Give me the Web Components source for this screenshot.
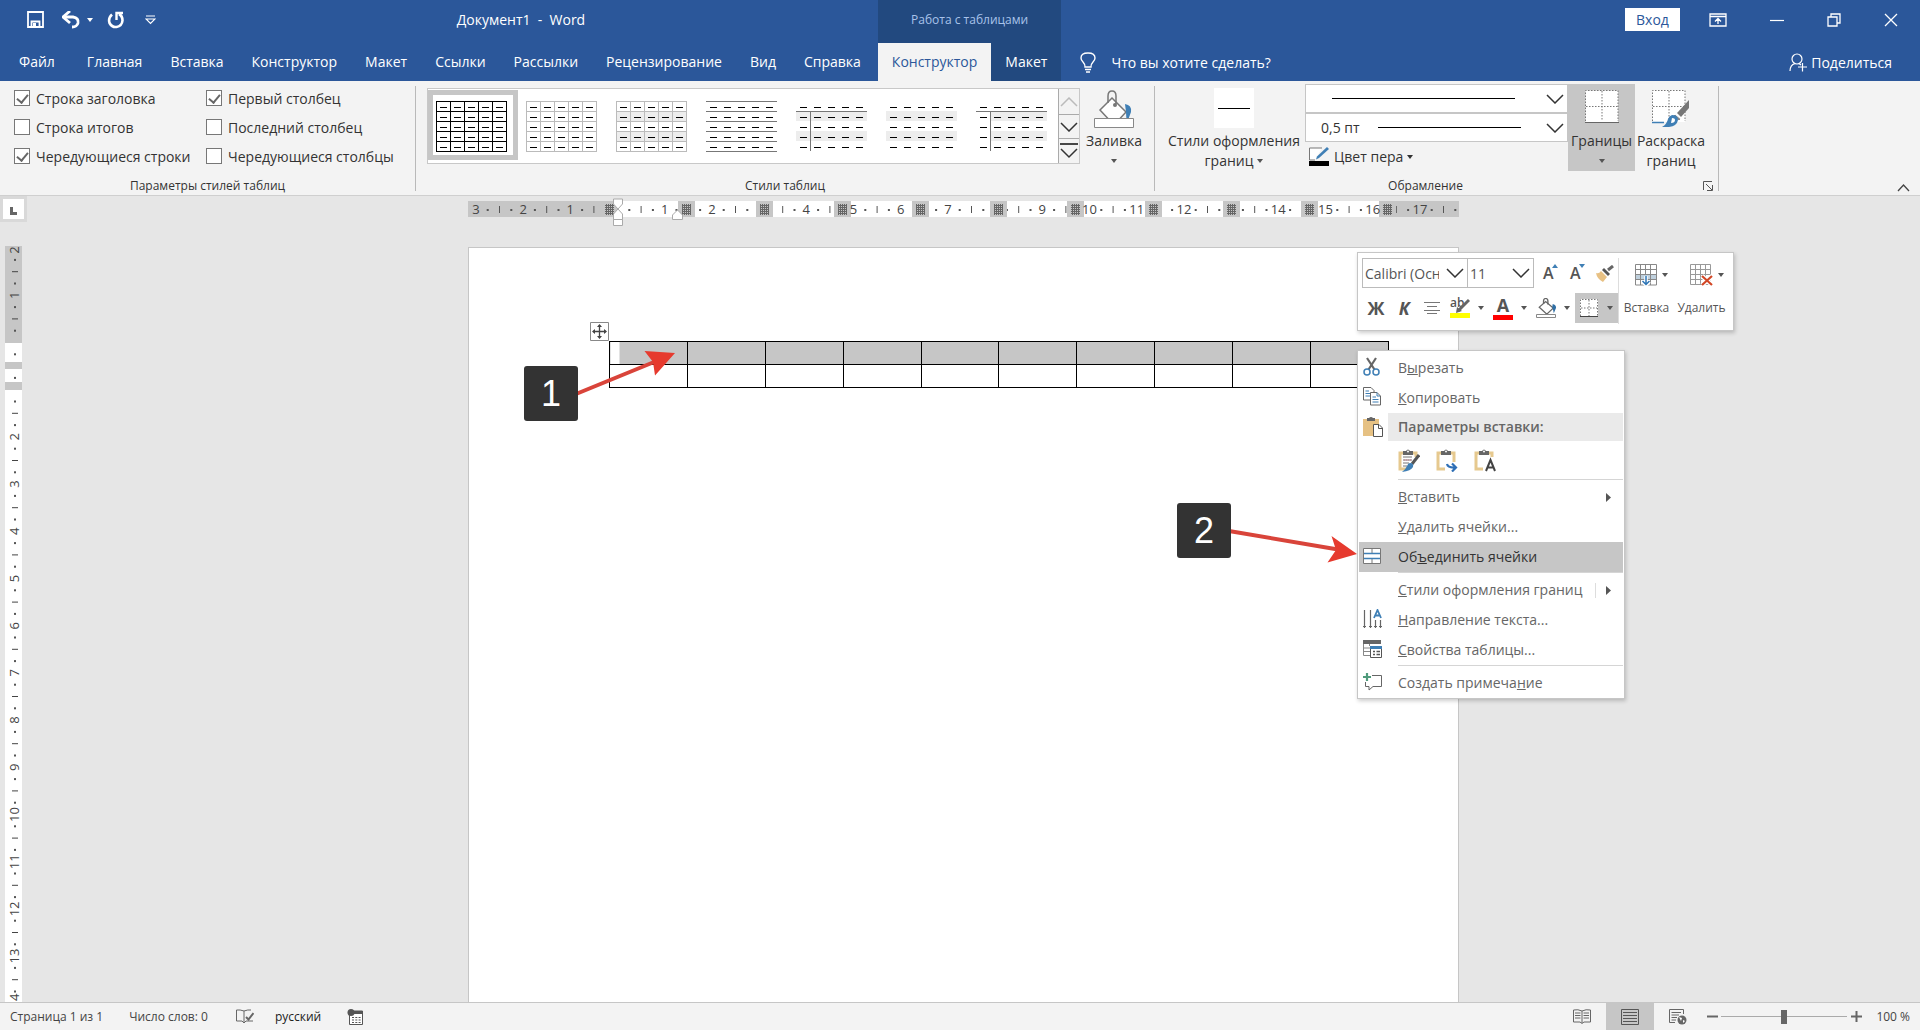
<!DOCTYPE html>
<html lang="ru">
<head>
<meta charset="utf-8">
<title>Документ1 - Word</title>
<style>
html,body{margin:0;height:100%}
body{font-family:"Open Sans","Noto Sans",sans-serif;font-size:14px;color:#333;overflow:hidden;
--blue:#2b579a;--dark:#22497f;--bar:#f3f3f3;--sel:#c6c6c6}
</style>
</head>
<body>
<word-app></word-app>
<script>
const reset=`<style>
*{box-sizing:border-box}
button,select,input{font:inherit;color:inherit;margin:0}
button{background:none;border:0;padding:0}
select{appearance:none;border:0;background:transparent;outline:0;border-radius:0}
svg{display:block}
</style>`;
function define(name,html,setup){
  const t=document.createElement('template');
  t.innerHTML=reset+html;
  customElements.define(name,class extends HTMLElement{
    constructor(){super();this.attachShadow({mode:'open'}).append(t.content.cloneNode(true));}
    connectedCallback(){if(setup&&!this.ready){this.ready=true;setup(this,this.shadowRoot);}}
  });
}

const clip=`<path d="M5 4H2V20H9M15 4H18V8" fill="none" stroke="#e6c98f" stroke-width="3"/><path d="M5 2H8Q10 -1 12 2H15V6H5Z" fill="#666"/><circle cx="10" cy="2.500" r="1" fill="#fff"/>`;
const bucket=`<path d="M18 8L32 22L20 35L6 20Z" fill="#fff" stroke="#777" stroke-width="1.500"/><path d="M14 13V6Q14 1 18 1Q22 1 22 6V14" fill="none" stroke="#777" stroke-width="1.500"/><circle cx="21" cy="15" r="2" fill="#777"/><path d="M31 14Q38 15 37 22L33 33Q32 26 32 22Z" fill="#3f7fb5"/>`;
const icons={
save:[17,17,'<path d="M1 1H16V16H1Z" fill="none" stroke="#fff" stroke-width="1.800"/><path d="M4.500 16V10.500H12.500V16" fill="none" stroke="#fff" stroke-width="1.800"/><path d="M6 12H9V16H6Z" fill="#fff"/>'],
undo:[19,18,'<path d="M3 6H11Q17 7 16 12Q15 16 10 16" fill="none" stroke="#fff" stroke-width="2.800"/><path d="M8 0L1 6L8 12" fill="none" stroke="#fff" stroke-width="2.800"/>'],
redo:[18,18,'<path d="M5 3.500Q1 7 2.500 12Q5 16.500 9.500 16Q15 15 15.500 9.500Q15.500 5 12 3" fill="none" stroke="#fff" stroke-width="2.600"/><path d="M9.500 9V2H16" fill="none" stroke="#fff" stroke-width="2.400"/>'],
qat:[11,10,'<path d="M1 1H10M1 4H10L5.500 8.500Z" fill="none" stroke="#fff" stroke-width="1.200"/>'],
down:[6,4,'<path d="M0 0H6L3 4Z" fill="currentColor"/>'],
right:[5,9,'<path d="M0 0L5 4.500L0 9Z" fill="#555"/>'],
chev:[18,10,'<path d="M1 1L9 9L17 1" fill="none" stroke="#333" stroke-width="1.500"/>'],
chevup:[18,10,'<path d="M1 9L9 1L17 9" fill="none" stroke="#bbb" stroke-width="1.500"/>'],
more:[18,16,'<path d="M0 1H18" stroke="#333" stroke-width="1.800"/><path d="M1 6L9 14L17 6" fill="none" stroke="#333" stroke-width="1.500"/>'],
collapse:[13,8,'<path d="M1 7L6.500 1L12 7" fill="none" stroke="#444" stroke-width="1.300"/>'],
bulb:[16,21,'<path d="M5 15Q5 12 3 10Q1 8 1 6Q1 1 8 1Q15 1 15 6Q15 8 13 10Q11 12 11 15Z" fill="none" stroke="#fff" stroke-width="1.400"/><path d="M5 17.500H11M6 20H10" stroke="#fff" stroke-width="1.500"/>'],
ribbon:[18,14,'<path d="M1 1H17V13H1ZM1 3.500H17M9 11V6M6 8.500L9 5.500L12 8.500" fill="none" stroke="#fff" stroke-width="1.300"/>'],
min:[14,14,'<path d="M0 7.500H14" stroke="#fff" stroke-width="1.200"/>'],
restore:[14,14,'<path d="M1 4H10V13H1ZM4 4V1H13V10H10" fill="none" stroke="#fff" stroke-width="1.300"/>'],
close:[14,14,'<path d="M1 1L13 13M13 1L1 13" stroke="#fff" stroke-width="1.300"/>'],
share:[19,19,'<circle cx="8" cy="6" r="5" fill="none" stroke="#fff" stroke-width="1.200"/><path d="M1 18Q1 12 6 10.500M10 10.500L12 12M9 14H18M13.500 10V18.500" fill="none" stroke="#fff" stroke-width="1.200"/>'],
bucket:[40,38,bucket+'<path d="M.5 28.500H39.500V37.500H.5Z" fill="#fff" stroke="#888"/>'],
bucketsm:[20,20,'<g transform="translate(0 0) scale(.54 .46)" stroke-width="2.500"><path d="M18 8L32 22L20 35L6 20Z" fill="#fff" stroke="#666"/><path d="M14 13V6Q14 1 18 1Q22 1 22 6V14" fill="none" stroke="#666"/><path d="M31 13Q38 15 37 22L33 33Q32 26 30 20Z" fill="#2f6fa5"/></g><path d="M.5 16.500H19.500V19.500H.5Z" fill="#fff" stroke="#888"/>'],
border:[34,33,'<path d="M.5 .5H33V32H.5Z" fill="#fff"/><path d="M.5 31V.5H33V31M17 1V31M1 16.500H33" fill="none" stroke="#777" stroke-dasharray="1.500 1.500"/><path d="M0 32.500H34" stroke="#666"/>'],
bordersm:[18,18,'<path d="M0 0H18V18H0Z" fill="#fff"/><path d="M.5 17V.5H17.500V17M9 1V17M1 9H17" fill="none" stroke="#777" stroke-dasharray="1.500 1.500"/><path d="M0 17.500H18" stroke="#444"/>'],
paint:[38,38,'<path d="M.5 .5H33V32H.5Z" fill="#fff"/><path d="M.5 31V.5H33V31M17 1V31M1 16.500H33" fill="none" stroke="#777" stroke-dasharray="1.500 1.500"/><path d="M0 32.500H12" stroke="#3f7fb5" stroke-width="1.500"/><path d="M37 10V18L29 27L25 23Z" fill="#777"/><path d="M23 24L29 29L27 31L21 26Z" fill="#888" stroke="#fff"/><path d="M20 25Q26 25 26 30Q25 36 17 37H10Q15 34 16 29Q17 26 20 25Z" fill="#3f7fb5"/><path d="M20 28Q23 28 23 30Q23 33 19 33" fill="#fff"/>'],
pen:[21,20,'<path d="M13 1H.5V13H6" fill="#fff" stroke="#777"/><path d="M18 0L20 2L10 11L7 12.500L8 9.500Z" fill="#3f7fb5"/><path d="M0 14H20V19H0Z" fill="#000"/>'],
launch:[10,10,'<path d="M.5 9V.5H9M3 3L9 9M9.500 4V9.500H4" fill="none" stroke="#555"/>'],
move:[19,19,'<path d="M.5 .5H18.500V18.500H.5Z" fill="#fff" stroke="#888"/><path d="M9.500 3V16M3 9.500H16" stroke="#444" stroke-width="1.300"/><path d="M9.500 2L7 5H12ZM9.500 17L7 14H12ZM2 9.500L5 7V12ZM17 9.500L14 7V12Z" fill="#444"/>'],
brush:[18,17,'<path d="M17 1L12 5" stroke="#666" stroke-width="3"/><path d="M8 3L14 9L12 11L6 5Z" fill="#555"/><path d="M5 6L11 12L7 17Q1 14 0 8Q3 9 5 6Z" fill="#e8c184"/>'],
ins:[22,22,'<path d="M1 1H21V21H1Z" fill="#fff"/><path d="M1 10H21V15H1Z" fill="#bfd0dd"/><path d="M.5 .5H21.500V21H.5ZM.5 5.500H21M.5 10.500H21M.5 15.500H21M5.500 1V21M10.500 1V10M15.500 1V21" fill="none" stroke="#888"/><path d="M11 12V21M7.500 17.500L11 21L14.500 17.500" fill="none" stroke="#fff" stroke-width="3.500"/><path d="M11 12V21M7.500 17L11 20.500L14.500 17" fill="none" stroke="#2e75b6" stroke-width="1.500"/>'],
del:[23,22,'<path d="M.5 .5H20.500V20.500H.5ZM.5 5.500H20M.5 10.500H20M.5 15.500H20M5.500 1V20M10.500 1V20M15.500 1V20" fill="none" stroke="#999"/><path d="M12 12L22 21M22 12L12 21" stroke="#fff" stroke-width="4.500"/><path d="M12 12L22 21M22 12L12 21" stroke="#d24726" stroke-width="2.200"/>'],
align:[16,12,'<path d="M0 .5H16M3 4.500H13M0 8.500H16M3 11.500H13" stroke="#777"/>'],
penhl:[20,20,'<path d="M19 2L8 13" stroke="#666" stroke-width="3"/><path d="M7 9L12 13L6 15Z" fill="#666"/><path d="M0 15H20V20H0Z" fill="#ff0"/>'],
scissors:[18,19,'<path d="M4 1L11.500 12.500M13 1L5.500 12.500" stroke="#666" stroke-width="2.200"/><circle cx="4" cy="15" r="3" fill="none" stroke="#3f7fb5" stroke-width="1.500"/><circle cx="13" cy="15" r="3" fill="none" stroke="#3f7fb5" stroke-width="1.500"/>'],
copy:[18,19,'<path d="M.5 .5H8L11 3.500V13H.5Z" fill="#fff" stroke="#666"/><path d="M2.500 4H6M2.500 6.500H7M2.500 9H7" stroke="#3f7fb5"/><path d="M7.500 5.500H14L17.500 9V18H7.500Z" fill="#fff" stroke="#666"/><path d="M14 5.500V9H17M9.500 10H13M9.500 12.500H15.500M9.500 15H15.500" fill="none" stroke="#3f7fb5"/>'],
paste:[20,20,'<path d="M0 2H16V19H0Z" fill="#e6c183"/><path d="M4 1H6Q8 -1 10 1H12V4H4Z" fill="#666"/><path d="M10.500 7.500H16L19.500 11V19.500H10.500Z" fill="#fff" stroke="#555"/><path d="M15.500 8V11.500H19" fill="none" stroke="#555"/>'],
pasteA:[22,23,clip+'<path d="M5 8H14M5 11H14M5 14H11M5 17H9" stroke="#777"/><path d="M6 11H13" stroke="#d87a8a" stroke-dasharray="1 1"/><path d="M21 6L14 15" stroke="#555" stroke-width="3"/><path d="M12 14Q16 14 15 18Q13 22 4 23Q8 20 9 17Q10 14 12 14Z" fill="#3f7fb5"/>'],
pasteB:[22,23,clip+'<path d="M18 8V13" stroke="#e6c98f" stroke-width="3"/><path d="M11 15Q12 19 19 18.500M16 14.500L20 18.500L16 22.500" fill="none" stroke="#2f6fb5" stroke-width="2.200"/>'],
pasteC:[22,23,clip+'<path d="M12 22L16.500 11L21 22M13.500 18.500H19.500" fill="none" stroke="#444" stroke-width="2"/>'],
merge:[18,16,'<path d="M.5 .5H17.500V15.500H.5Z" fill="#fff" stroke="#777"/><path d="M9 1V5M9 11V15" stroke="#777"/><path d="M1 5.500H17M1 10.500H17" stroke="#3f7fb5" stroke-width="1.300"/>'],
dir:[19,20,'<path d="M1.500 1V19M7.500 1V19M12.500 11V19M17.500 11V19" stroke="#666" stroke-width="1.200"/><path d="M0 17.500H3M6 17.500H9M11 17.500H14M16 17.500H19" stroke="#666"/><path d="M11 9L14.500 1L18 9M12 6.500H17" fill="none" stroke="#3f7fb5" stroke-width="1.800"/>'],
props:[19,18,'<path d="M0 0H18V4H0Z" fill="#666"/><path d="M.5 4V15.500H7M1 8H7M1 11.500H7M6.500 4V6" fill="none" stroke="#888"/><path d="M7.500 6.500H18.500V17.500H7.500Z" fill="#fff" stroke="#555"/><path d="M7 6H19V9H7Z" fill="#3f7fb5"/><path d="M10 11.500H12M13.500 11.500H17M10 14.500H12M13.500 14.500H17" stroke="#555" stroke-width="1.300"/>'],
comment:[19,18,'<path d="M9 2.500H18.500V13.500H10L6 17V13.500H2.500V9" fill="none" stroke="#666"/><path d="M4 0V8M0 4H8" stroke="#4f9a7b" stroke-width="2.200"/>'],
proof:[18,15,'<path d="M8 2Q4 .5 .5 1V12H6L8 14V2Q12 .5 15 1M8 14L10 12H17" fill="none" stroke="#666"/><path d="M10 8L12.500 10.500L17.500 4" fill="none" stroke="#666" stroke-width="2"/>'],
macro:[16,16,'<path d="M2.500 4V15.500H15.500V2H5" fill="#fff" stroke="#555"/><path d="M5 2H16V5H5Z" fill="#555"/><circle cx="4" cy="3.500" r="3.500" fill="#555"/><path d="M5 8.500H14M5 11H14M5 13.500H14" stroke="#555" stroke-dasharray="2 1.300"/>'],
read:[18,15,'<path d="M9 2Q5 0 .5 1V13H7L9 14.500L11 13H17.500V1Q13 0 9 2V14" fill="none" stroke="#666"/><path d="M2 4H7.500M2 6.500H7.500M2 9H7.500M10.500 4H16M10.500 6.500H16M10.500 9H16" stroke="#666"/>'],
print:[18,16,'<path d="M.5 .5H17.500V15.500H.5Z" fill="none" stroke="#555"/><path d="M2 3.500H16M2 6.500H16M2 9.500H16M2 12.500H16" stroke="#555"/>'],
web:[18,16,'<path d="M6 13.500H.5V.5H14.500V5M2.500 3.500H12M2.500 6H10M2.500 8.500H8M2.500 11H7" fill="none" stroke="#666"/><circle cx="13" cy="11" r="4.500" fill="#666"/><path d="M10 8L13 9L12 12ZM14 11L16 12L14 14Z" fill="#fff"/>'],
tab:[21,20,'<path d="M8.500 8V14.500H14" fill="none" stroke="#666" stroke-width="3"/>']
};
define('w-icon','<style>:host{display:block;flex:none}</style><div></div>',(el,r)=>{
  const [w,h,d]=icons[el.getAttribute('name')];
  r.querySelector('div').innerHTML=`<svg width="${w}" height="${h}" viewBox="0 0 ${w} ${h}" aria-hidden="true">${d}</svg>`;
});

define('w-tab',`<style>
:host{display:block}
button{height:38px;padding:0 14px 1px;color:#fff;white-space:nowrap;line-height:20px;display:block}
:host([active]) button{background:var(--bar);color:var(--blue)}
</style><button role="tab"><slot></slot></button>`);

define('w-header',`<style>
:host{display:grid;grid-template-columns:max-content max-content 1fr;grid-template-rows:43px 38px;background:var(--blue);color:#fff}
.quick{display:flex;align-items:center;padding:0 6px 4px 27px}
.quick button{margin-right:14px}.quick .u{margin:0 6px 0 4px}.quick .q{margin-left:6px}
.title{flex:1;text-align:center;white-space:pre}
.ctx{background:var(--dark);color:#a9c3ea;font-size:12px;display:grid;place-items:center;padding-bottom:4px}
.ctxtabs{background:var(--dark)}
.win{display:flex;justify-content:flex-end;align-items:center;padding:0 22px 4px 0}
.win button{margin-left:43px}
.win .login{background:#fff;color:var(--blue);height:23px;width:55px;line-height:20px;margin-left:0}
.win .login+button{margin-left:29px}
.tabs{display:flex}.main{padding:0 3px 0 5px}.main w-tab:first-of-type{margin-right:4px}
.right{display:flex;justify-content:space-between;align-items:center;padding:0 28px 0 19px}
.right button{display:flex;align-items:center;gap:15px}.right .share{gap:3px}
</style>
<div class="quick"><button aria-label="Сохранить"><w-icon name="save"></w-icon></button><button class="u" aria-label="Отменить"><w-icon name="undo"></w-icon></button><button aria-label="Список отмены"><w-icon name="down"></w-icon></button><button aria-label="Повторить"><w-icon name="redo"></w-icon></button><button class="q" aria-label="Настройка панели"><w-icon name="qat"></w-icon></button><span class="title">Документ1  -  Word</span></div>
<div class="ctx">Работа с таблицами</div>
<div class="win"><button class="login">Вход</button><button aria-label="Параметры ленты"><w-icon name="ribbon"></w-icon></button><button aria-label="Свернуть"><w-icon name="min"></w-icon></button><button aria-label="Восстановить"><w-icon name="restore"></w-icon></button><button aria-label="Закрыть"><w-icon name="close"></w-icon></button></div>
<div class="tabs main"><w-tab>Файл</w-tab><w-tab>Главная</w-tab><w-tab>Вставка</w-tab><w-tab>Конструктор</w-tab><w-tab>Макет</w-tab><w-tab>Ссылки</w-tab><w-tab>Рассылки</w-tab><w-tab>Рецензирование</w-tab><w-tab>Вид</w-tab><w-tab>Справка</w-tab></div>
<div class="tabs ctxtabs"><w-tab active>Конструктор</w-tab><w-tab>Макет</w-tab></div>
<div class="right"><button><w-icon name="bulb"></w-icon>Что вы хотите сделать?</button><button class="share"><w-icon name="share"></w-icon>Поделиться</button></div>`);

define('w-check',`<style>
:host{display:block}
label{display:flex;align-items:center;gap:6px;height:16px;white-space:nowrap}
input{appearance:none;width:16px;height:16px;border:1px solid #777;background:#fff;flex:none;display:grid;place-items:center}
input:checked::after{content:"";width:5px;height:9px;border:solid #666;border-width:0 2px 2px 0;transform:translateY(-1px) rotate(40deg)}
</style><label><input type="checkbox"><slot></slot></label>`,(el,r)=>{r.querySelector('input').checked=el.hasAttribute('checked');});

define('w-group',`<style>
:host{display:flex;flex-direction:column;position:relative}
.body{display:flex;height:101px;padding-top:3px}
.foot{text-align:center;font-size:12px;line-height:14px;padding-right:var(--foot,0);margin-top:-3px}
</style><div class="body"><slot></slot></div><div class="foot"></div><slot name="launch"></slot>`,(el,r)=>{r.querySelector('.foot').textContent=el.getAttribute('label');});

define('w-big',`<style>
:host{display:block}
button{width:100%;height:87px;display:flex;flex-direction:column;align-items:center;line-height:20px;color:#333}
:host([active]) button{background:var(--sel)}
.ic{height:47px;display:flex;padding-top:6px;width:100%;justify-content:center}
.l{display:flex;gap:4px;align-items:center;height:20px;white-space:nowrap}
::slotted(w-icon){color:#555}
</style><button><span class="ic"><slot name="icon"></slot></span><span class="l"><slot></slot></span><span class="l"><slot name="two"></slot></span></button>`);

define('style-thumb',`<style>
:host{display:block;width:90px;height:70px;flex:none}
button{width:100%;height:100%;padding:3px 0 0 3px;border:5px solid transparent;display:block}
:host([active]) button{border-color:var(--sel)}
</style><button></button>`,(el,r)=>{
  const k=el.getAttribute('kind');let s='';
  const line=(x1,y1,x2,y2,c)=>{s+=`<path d="M${x1} ${y1}L${x2} ${y2}" stroke="${c}"/>`;};
  if('cefg'.includes(k))for(const y of[10,30])s+=`<rect x="${k=='g'?14:0}" y="${y}" width="${k=='g'?57:71}" height="10" fill="#ededed"/>`;
  if('abc'.includes(k)){const c=k=='a'?'#000':'#bbb';
    for(let i=0;i<6;i++){line(0,i*10+.5,71,i*10+.5,c);line(i*14+.5,0,i*14+.5,51,c);}}
  if(k=='d')for(let i=0;i<6;i++)line(0,i*10+.5,71,i*10+.5,'#777');
  if(k=='e'||k=='g'){line(0,10.5,71,10.5,'#777');line(14.5,10,14.5,50,'#777');}
  for(let i=0;i<5;i++)for(let j=0;j<5;j++)line(i*14+4,j*10+6.5,i*14+11,j*10+6.5,'#000');
  const b=r.querySelector('button');b.setAttribute('aria-label','Стиль таблицы');
  b.innerHTML=`<svg width="72" height="52">${s}</svg>`;
});

define('line-combo',`<style>
:host{display:grid;align-items:center;width:263px;height:29px;border:1px solid var(--sel);background:#fff}
select,.art{grid-area:1/1}
select{width:100%;height:100%;padding:0 30px 0 15px}
.art{display:flex;align-items:center;justify-content:flex-end;padding-right:3px;pointer-events:none}
hr{border:0;height:1px;background:#000;margin:0 var(--gap,31px) 0 0;width:var(--line,183px)}
</style><select><option></option></select><span class="art"><hr><w-icon name="chev"></w-icon></span>`,(el,r)=>{
  const s=r.querySelector('select');s.setAttribute('aria-label',el.getAttribute('label'));s.options[0].textContent=el.getAttribute('value')||'';
});

define('w-ribbon',`<style>
:host{display:flex;height:115px;background:var(--bar);border-bottom:1px solid #cfcfcf}
.sep{width:1px;background:#b9b9b9;margin:5px 0 4px;flex:none}
.opts{display:grid;grid-template-columns:192px 209px;grid-auto-rows:29px;padding:6px 0 0 14px}
.gal{display:flex;width:653px;height:76px;margin:4px 0 0 11px;border:1px solid #c8c8c8;background:#fff}
.items{flex:1;display:flex;padding-top:1px}
.sc{width:21px;display:grid;grid-template-rows:26px 1fr 24px;background:var(--bar);border-left:1px solid #aaa}
.sc button{display:grid;place-items:center;border-bottom:1px solid #aaa}.sc button:last-child{border:0}
.fill{width:68px;margin-right:6px}
.bs{width:142px;margin-left:8px}
.white{width:40px;height:40px;margin-top:-2px;background:#fff;display:grid;place-items:center}
.white i{width:32px;height:1px;background:#000}
.pen{display:flex;align-items:center;gap:4px;height:29px;padding-left:4px;line-height:20px;color:#333}
.combos{width:263px}
.pts{--line:143px;--gap:25px}
.bord{width:67px}.paint{width:72px;margin-right:11px}
.g3{--foot:22px}
.launch{position:absolute;right:5px;bottom:4px}
.collapse{margin:auto 10px 3px auto}
</style>
<w-group label="Параметры стилей таблиц"><div class="opts"><w-check checked>Строка заголовка</w-check><w-check checked>Первый столбец</w-check><w-check>Строка итогов</w-check><w-check>Последний столбец</w-check><w-check checked>Чередующиеся строки</w-check><w-check>Чередующиеся столбцы</w-check></div></w-group><i class="sep"></i>
<w-group label="Стили таблиц"><div class="gal"><div class="items"><style-thumb kind="a" active></style-thumb><style-thumb kind="b"></style-thumb><style-thumb kind="c"></style-thumb><style-thumb kind="d"></style-thumb><style-thumb kind="e"></style-thumb><style-thumb kind="f"></style-thumb><style-thumb kind="g"></style-thumb></div><div class="sc"><button aria-label="Вверх"><w-icon name="chevup"></w-icon></button><button aria-label="Вниз"><w-icon name="chev"></w-icon></button><button aria-label="Дополнительно"><w-icon name="more"></w-icon></button></div></div>
<w-big class="fill"><w-icon slot="icon" name="bucket"></w-icon>Заливка<w-icon slot="two" name="down"></w-icon></w-big></w-group><i class="sep"></i>
<w-group class="g3" label="Обрамление"><w-big class="bs"><span slot="icon" class="white"><i></i></span>Стили оформления<span slot="two">границ</span><w-icon slot="two" name="down"></w-icon></w-big>
<div class="combos"><line-combo label="Стиль пера"></line-combo><line-combo class="pts" label="Толщина пера" value="0,5 пт"></line-combo><button class="pen"><w-icon name="pen"></w-icon>Цвет пера<w-icon name="down"></w-icon></button></div>
<w-big class="bord" active><w-icon slot="icon" name="border"></w-icon>Границы<w-icon slot="two" name="down"></w-icon></w-big>
<w-big class="paint"><w-icon slot="icon" name="paint"></w-icon>Раскраска<span slot="two">границ</span></w-big>
<button class="launch" slot="launch" aria-label="Параметры границ"><w-icon name="launch"></w-icon></button></w-group><i class="sep"></i>
<button class="collapse" aria-label="Свернуть ленту"><w-icon name="collapse"></w-icon></button>`);

const unit=47.2;
define('h-ruler','<style>:host{display:block;width:991px;height:27px}svg{overflow:visible}</style><svg width="991" height="27"></svg>',(el,r)=>{
  let s='<rect width="991" height="16" fill="#c6c6c6"/><rect x="150" width="768" height="16" fill="#fff"/>';
  const zero=149.5,step=77.8;
  let marks='';
  for(let i=0;i<11;i++){const x=Math.round(140.5+i*step);
    marks+=`<rect x="${x-8}" width="17" height="16" fill="#c6c6c6"/><rect x="${x-4}" y="3" width="9" height="11" fill="url(#m)"/>`;}
  for(let q=-12;q<=71;q++){
    const x=zero+q*unit/4;if(q===0)continue;
    const near=(x-140.5)/step,d=Math.abs(near-Math.round(near))*step;
    if(near>-.3&&near<10.3&&d<8)continue;
    if(q%4===0)marks+=`<text x="${x}" y="13">${Math.abs(q/4)}</text>`;
    else if(q%2===0)s+=`<path d="M${x} 5V12" stroke="#555"/>`;
    else s+=`<rect x="${x-1}" y="8" width="2" height="2" fill="#555"/>`;
  }
  r.querySelector('svg').innerHTML='<defs><pattern id="m" width="2" height="2" patternUnits="userSpaceOnUse"><path d="M0 0H2V1H1V2H0Z" fill="#666"/></pattern></defs><g font-size="13" fill="#444" text-anchor="middle">'+s+marks+'</g><g fill="#fff" stroke="#aaa"><path d="M145.500 -2V3L150 8L154.500 3V-2Z"/><path d="M145.500 18.500V13L150 8L154.500 13V18.500ZM145.500 18.500H154.500V24.500H145.500ZM204.500 18.500V14L209.500 9L214.500 14V18.500Z"/></g>';
});
define('v-ruler','<style>:host{display:block;flex:none;overflow:hidden;width:17px;background:#fff}</style><svg width="17" height="1200"></svg>',(el,r)=>{
  let s='<rect width="17" height="97" fill="#c6c6c6"/>';
  for(let q=-8;q<=56;q++){
    const y=96.5+q*unit/4;if(q===0||q===2||q===4)continue;
    if(q%4===0)s+=`<text transform="translate(14 ${q===56?y-6:q===-8?y+2:y}) rotate(-90)">${q===56?4:Math.abs(q/4)}</text>`;
    else if(q%2===0)s+=`<path d="M7 ${y}H13" stroke="#444"/>`;
    else s+=`<rect x="9" y="${y-1}" width="2" height="2" fill="#555"/>`;
  }
  s+='<rect y="116" width="17" height="7" fill="#c6c6c6"/><rect y="136" width="17" height="8" fill="#c6c6c6"/>';
  r.querySelector('svg').innerHTML='<g font-size="13" fill="#444" text-anchor="middle">'+s+'</g>';
});

define('doc-table',`<style>
:host{display:block;position:relative;width:780px}
table{border-collapse:collapse;table-layout:fixed;width:100%}
td{border:1px solid #000;height:23px;padding:0}
.sel td{background:var(--sel)}
.sel td:first-child{background:linear-gradient(90deg,#fff 9px,var(--sel) 9px)}
button{position:absolute;left:-19px;top:-19px}
</style><button aria-label="Переместить таблицу"><w-icon name="move"></w-icon></button><table><tbody></tbody></table>`,(el,r)=>{
  const row='<td></td>'.repeat(10);r.querySelector('tbody').innerHTML=`<tr class="sel">${row}</tr><tr>${row}</tr>`;
});

define('step-badge',`<style>:host{display:grid;place-items:center;width:54px;height:55px;border-radius:3px;background:#333;color:#fff;font:36px/40px "Liberation Sans",sans-serif;position:absolute}</style><slot></slot>`);

define('mini-bar',`<style>
:host{display:flex;width:377px;height:79px;background:#fff;border:1px solid var(--sel);box-shadow:1px 2px 4px #0003;color:#555;padding:5px 0 6px 4px}
.left{width:257px;border-right:1px solid #ddd;display:flex;flex-direction:column;gap:5px}
.row{display:flex;align-items:center;height:30px}
.c{display:grid;align-items:center;border:1px solid #bbb;height:30px}
.c>*{grid-area:1/1}.c w-icon{justify-self:end;margin-right:3px;pointer-events:none}
.c select{width:100%;height:28px;padding:0 28px 0 2px}
.c1{width:106px}.c2{width:67px;margin-left:-1px}
.s{display:flex;align-items:flex-start;font:600 16px/20px "Open Sans",sans-serif;margin-left:9px;width:18px}
.s svg{margin-top:1px;margin-left:-2px}
.b{font-weight:700;font-size:18px;line-height:20px;width:20px;text-align:center}
.ab{display:grid;width:20px;height:20px}
.ab>*{grid-area:1/1}.ab b{font:600 12px/10px "Open Sans",sans-serif;text-align:left}
.ca{display:grid;justify-items:center;width:20px;height:24px;font:700 18px/19px "Open Sans",sans-serif;border-bottom:5px solid red}
.dd{margin:0 9px 0 8px}
.act{background:var(--sel);height:30px;width:43px;display:flex;align-items:center;justify-content:space-between;padding:0 5px}
.big{width:55px;display:flex;flex-direction:column;align-items:center;font-size:12px;line-height:16px;padding-top:6px;gap:14px}
.big span{display:flex;align-items:center;gap:5px;padding-left:10px;height:22px}
</style>
<div class="left"><div class="row"><span class="c c1"><select aria-label="Шрифт"><option>Calibri (Осн</option></select><w-icon name="chev"></w-icon></span><span class="c c2"><select aria-label="Размер"><option>11</option></select><w-icon name="chev"></w-icon></span>
<button class="s">A<svg width="6" height="4"><path d="M0 4L3 0L6 4Z" fill="#3f7fb5"/></svg></button><button class="s">A<svg width="6" height="4"><path d="M0 0L3 4L6 0Z" fill="#3f7fb5"/></svg></button><button aria-label="Формат по образцу" style="margin-left:8px"><w-icon name="brush"></w-icon></button></div>
<div class="row"><button class="b" style="margin-left:4px">Ж</button><button class="b" style="margin-left:8px"><i>К</i></button><button aria-label="По центру" style="margin:0 10px 0 10px"><w-icon name="align"></w-icon></button><button class="ab"><b>ab</b><w-icon name="penhl"></w-icon></button><w-icon class="dd" name="down"></w-icon><button class="ca">A</button><w-icon class="dd" name="down"></w-icon><button aria-label="Заливка"><w-icon name="bucketsm"></w-icon></button><w-icon class="dd" name="down" style="margin-right:5px"></w-icon><button class="act" aria-label="Границы"><w-icon name="bordersm"></w-icon><w-icon name="down"></w-icon></button></div></div>
<button class="big"><span><w-icon name="ins"></w-icon><w-icon name="down"></w-icon></span>Вставка</button><button class="big"><span><w-icon name="del"></w-icon><w-icon name="down"></w-icon></span>Удалить</button>`);

define('menu-item',`<style>
:host{display:block}
button{width:100%;height:30px;display:flex;align-items:center;text-align:left;padding:0 12px 0 4px;line-height:20px;color:#666}
.i{width:35px;flex:none;padding-bottom:3px}.t{flex:1;white-space:nowrap}
:host([active]) button{background:var(--sel);color:#333}
:host([split]) .arr{border-left:1px solid #ddd;padding:3px 0 3px 10px}
:host(:not([sub])) .arr{display:none}
</style><button role="menuitem"><span class="i"></span><span class="t"><slot></slot></span><span class="arr"><w-icon name="right"></w-icon></span></button>`,(el,r)=>{
  const i=el.getAttribute('icon');if(i)r.querySelector('.i').innerHTML=`<w-icon name="${i}"></w-icon>`;
});
define('context-menu',`<style>
:host{display:block;width:268px;background:#fff;border:1px solid var(--sel);box-shadow:1px 2px 4px #0003;padding:2px 1px 0;color:#666}
hr{border:0;height:1px;background:#d5d5d5;margin:0 0 2px 39px}
.head{display:flex;align-items:center;height:28px;font-weight:600;padding-left:4px}
.head b{flex:1;margin-left:5px;padding-left:10px;background:#eaeaea;line-height:28px;font-weight:inherit}
.opts{display:flex;gap:16px;height:38px;align-items:center;padding-left:39px}
</style>
<menu-item icon="scissors">В<u>ы</u>резать</menu-item><menu-item icon="copy"><u>К</u>опировать</menu-item>
<div class="head"><w-icon name="paste"></w-icon><b>Параметры вставки:</b></div>
<div class="opts"><button aria-label="Сохранить исходное форматирование"><w-icon name="pasteA"></w-icon></button><button aria-label="Объединить форматирование"><w-icon name="pasteB"></w-icon></button><button aria-label="Сохранить только текст"><w-icon name="pasteC"></w-icon></button></div><hr>
<menu-item sub><u>В</u>ставить</menu-item><menu-item><u>У</u>далить ячейки...</menu-item><menu-item active icon="merge">Об<u>ъ</u>единить ячейки</menu-item><hr>
<menu-item sub split><u>С</u>тили оформления границ</menu-item><menu-item icon="dir"><u>Н</u>аправление текста...</menu-item><menu-item icon="props"><u>С</u>войства таблицы...</menu-item><hr>
<menu-item icon="comment">Создать примеча<u>н</u>ие</menu-item>`);

define('work-area',`<style>
:host{display:grid;grid-template-columns:27px 1fr;grid-template-rows:51px 1fr;background:#e6e6e6;overflow:hidden}
.corner{border:3px solid #d9d9d9;width:27px;height:26px;background:#fff}
.top{display:flex;justify-content:center;padding:5px 20px 0 0}
.side{display:flex;padding-left:5px;margin-top:-1px;min-height:0}
.canvas{display:flex;justify-content:center;padding-right:20px;min-height:0}
.page{position:relative;width:991px;background:#fff;border:1px solid var(--sel);border-bottom:0;padding:93px 0 0 140px}
.arrows{position:absolute;left:0;top:0;pointer-events:none}
mini-bar,context-menu{position:absolute;left:888px}
mini-bar{top:4px}context-menu{top:102px}
.one{left:55px;top:118px}.two{left:708px;top:255px}
</style>
<button class="corner" aria-label="Табуляция"><w-icon name="tab"></w-icon></button><div class="top"><h-ruler></h-ruler></div>
<div class="side"><v-ruler></v-ruler></div>
<div class="canvas"><div class="page"><doc-table></doc-table>
<mini-bar></mini-bar><context-menu></context-menu>
<svg class="arrows" width="900" height="400"><g stroke="#d9443a" stroke-width="4"><path d="M107 146L190 112M760 283L872 302"/></g><path d="M206 105L175.500 103L184 114L186 127.500ZM888 306L862.500 288L867 302L858.500 314.500Z" fill="#e63a2e"/></svg>
<step-badge class="one">1</step-badge><step-badge class="two">2</step-badge></div></div>`);

define('status-bar',`<style>
:host{display:flex;align-items:center;height:28px;background:var(--bar);border-top:1px solid var(--sel);font-size:12px;padding:0 10px;color:#444}
span{white-space:nowrap}
.gap{flex:1}
.v{height:27px;width:48px;display:grid;place-items:center}.v.on{background:var(--sel)}
.z{width:12px;font-size:0;display:grid;place-items:center}
input{appearance:none;width:126px;height:14px;background:linear-gradient(#aaa,#aaa) center/100% 1px no-repeat;margin:0 3px}
input::-webkit-slider-thumb{appearance:none;width:6px;height:14px;background:#666}
</style><span>Страница 1 из 1</span><span style="margin-left:26px">Число слов: 0</span><button aria-label="Правописание" style="margin:0 21px 0 28px"><w-icon name="proof"></w-icon></button><span style="color:#222">русский</span><button aria-label="Макрос" style="margin-left:26px"><w-icon name="macro"></w-icon></button><span class="gap"></span>
<button class="v" aria-label="Чтение"><w-icon name="read"></w-icon></button><button class="v on" aria-label="Разметка"><w-icon name="print"></w-icon></button><button class="v" aria-label="Веб-документ"><w-icon name="web"></w-icon></button>
<button class="z" aria-label="Уменьшить" style="margin-left:4px"><svg width="11" height="11"><path d="M0 5.500H11" stroke="#666" stroke-width="2"/></svg></button><input type="range" aria-label="Масштаб" value="50"><button class="z" aria-label="Увеличить"><svg width="11" height="11"><path d="M0 5.500H11M5.500 0V11" stroke="#666" stroke-width="2"/></svg></button><span style="margin-left:14px">100 %</span>`);

define('word-app',`<style>:host{display:flex;flex-direction:column;height:100vh}work-area{flex:1;min-height:0}</style>
<w-header></w-header><w-ribbon></w-ribbon><work-area></work-area><status-bar></status-bar>`);
</script>
</body>
</html>
